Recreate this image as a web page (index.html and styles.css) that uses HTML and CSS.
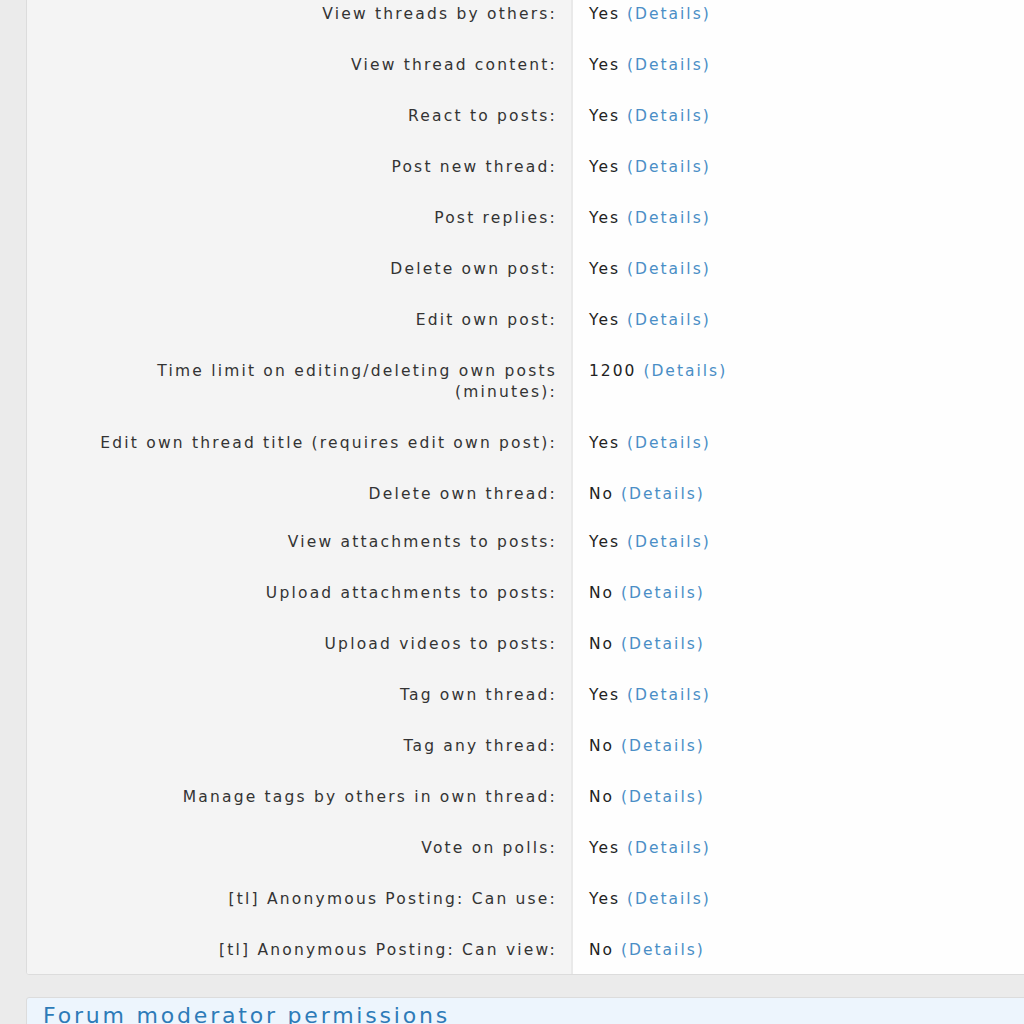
FILE: index.html
```html
<!DOCTYPE html>
<html lang="en">
<head>
<meta charset="UTF-8" />
<title>Permission analysis</title>
<link rel="stylesheet" href="styles.css">
</head>
<body>

<!-- Forum permissions block (scrolled) -->
<div class="block">
  <dl class="pair"><dt>View threads by others:</dt><dd>Yes <a href="#">(Details)</a></dd></dl>
  <dl class="pair"><dt>View thread content:</dt><dd>Yes <a href="#">(Details)</a></dd></dl>
  <dl class="pair"><dt>React to posts:</dt><dd>Yes <a href="#">(Details)</a></dd></dl>
  <dl class="pair"><dt>Post new thread:</dt><dd>Yes <a href="#">(Details)</a></dd></dl>
  <dl class="pair"><dt>Post replies:</dt><dd>Yes <a href="#">(Details)</a></dd></dl>
  <dl class="pair"><dt>Delete own post:</dt><dd>Yes <a href="#">(Details)</a></dd></dl>
  <dl class="pair"><dt>Edit own post:</dt><dd>Yes <a href="#">(Details)</a></dd></dl>
  <dl class="pair"><dt>Time limit on editing/deleting own posts (minutes):</dt><dd>1200 <a href="#">(Details)</a></dd></dl>
  <dl class="pair"><dt>Edit own thread title (requires edit own post):</dt><dd>Yes <a href="#">(Details)</a></dd></dl>
  <dl class="pair pair--tight"><dt>Delete own thread:</dt><dd>No <a href="#">(Details)</a></dd></dl>
  <dl class="pair"><dt>View attachments to posts:</dt><dd>Yes <a href="#">(Details)</a></dd></dl>
  <dl class="pair"><dt>Upload attachments to posts:</dt><dd>No <a href="#">(Details)</a></dd></dl>
  <dl class="pair"><dt>Upload videos to posts:</dt><dd>No <a href="#">(Details)</a></dd></dl>
  <dl class="pair"><dt>Tag own thread:</dt><dd>Yes <a href="#">(Details)</a></dd></dl>
  <dl class="pair"><dt>Tag any thread:</dt><dd>No <a href="#">(Details)</a></dd></dl>
  <dl class="pair"><dt>Manage tags by others in own thread:</dt><dd>No <a href="#">(Details)</a></dd></dl>
  <dl class="pair"><dt>Vote on polls:</dt><dd>Yes <a href="#">(Details)</a></dd></dl>
  <dl class="pair"><dt>[tl] Anonymous Posting: Can use:</dt><dd>Yes <a href="#">(Details)</a></dd></dl>
  <dl class="pair pair--last"><dt>[tl] Anonymous Posting: Can view:</dt><dd>No <a href="#">(Details)</a></dd></dl>
</div>

<!-- Next block header -->
<div class="block block--next">
  <h2 class="block-header">Forum moderator permissions</h2>
</div>

</body>
</html>
```

FILE: styles.css
```css
/* Reset and basics */
* {margin:0; padding:0; box-sizing:border-box;}
html, body {
  height: 100%;
  overflow: hidden;
}
body {
  background: #ebebeb;
  font-family: 'DejaVu Sans', 'Noto Sans', sans-serif;
  font-size: 15.5px;
  line-height: 21px;
  color: #222;
  padding: 0 0 0 26px;
}
a {text-decoration: none; color: #4a8ec6;}

/* Blocks */
.block {
  background: #fefefe;
  border: 1px solid #dcdcdc;
  border-radius: 3px;
  margin-right: -20px;
  overflow: hidden;
}
.block:first-child {
  margin-top: -12px;
}
.block--next {
  margin-top: 22px;
  background: #edf5fd;
}
.block-header {
  font-size: 22px;
  font-weight: 400;
  color: #2d7bb8;
  line-height: 30px;
  padding: 3px 16px 10px;
  letter-spacing: 2.8px;
}

/* Label / value rows */
.pair {
  display: grid;
  grid-template-columns: 546px 1fr;
}
.pair dt {
  background: #f4f4f4;
  border-right: 2px solid #e9e9e9;
  text-align: right;
  padding: 15px 14px 15px 40px;
  color: #333;
  letter-spacing: 2.2px;
}
.pair dd {
  padding: 15px 16px 15px 16px;
  color: #222;
  letter-spacing: 2px;
}
.pair--tight dt,
.pair--tight dd {
  padding-bottom: 12px;
}
.pair--last dt,
.pair--last dd {
  padding-bottom: 13px;
}
```
